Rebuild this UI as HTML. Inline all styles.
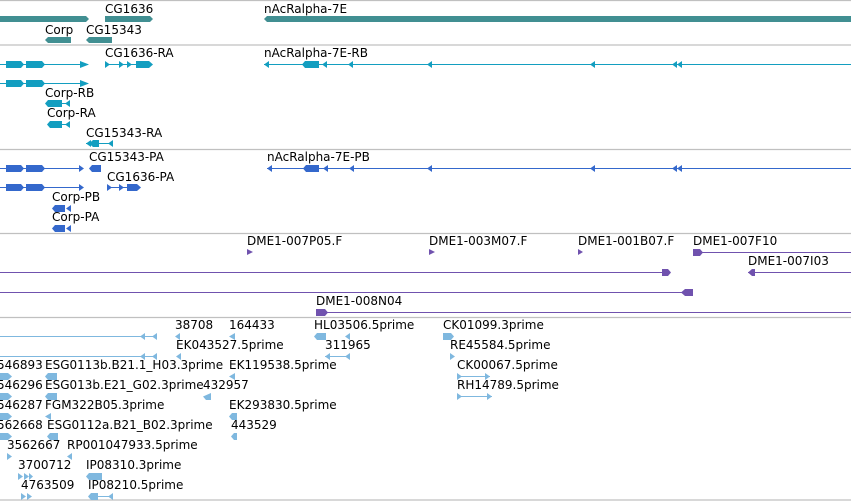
<!DOCTYPE html>
<html><head><meta charset="utf-8"><style>
html,body{margin:0;padding:0;background:#fff;width:851px;height:501px;overflow:hidden}
svg{display:block}
text{font-family:"DejaVu Sans","Liberation Sans",sans-serif;font-size:12px;fill:#000}
</style></head><body>
<svg width="851" height="501" viewBox="0 0 851 501">
<g stroke="#c0c0c0" stroke-width="1.2">
<line x1="0" y1="0.5" x2="851" y2="0.5"/><line x1="0" y1="45" x2="851" y2="45"/>
<line x1="0" y1="149.5" x2="851" y2="149.5"/><line x1="0" y1="233.5" x2="851" y2="233.5"/>
<line x1="0" y1="317.5" x2="851" y2="317.5"/><line x1="0" y1="500" x2="851" y2="500"/>
</g>
<!-- track 1 -->
<g fill="#418f92">
<polygon points="0,16 86,16 89,19 86,22 0,22"/>
<polygon points="105,16 150,16 153,19 150,22 105,22"/>
<polygon points="267,16 851,16 851,22 267,22 264,19"/>
<polygon points="48,37 71,37 71,43 48,43 45,40"/>
<polygon points="89,37 112,37 112,43 89,43 86,40"/>
</g>
<text x="105" y="13">CG1636</text><text x="264" y="13">nAcRalpha-7E</text>
<text x="45" y="34">Corp</text><text x="86" y="34">CG15343</text>
<!-- track 2 -->
<g fill="#139ec0" stroke="#139ec0">
<line x1="0" y1="64.5" x2="88" y2="64.5"/><line x1="105" y1="64.5" x2="150" y2="64.5"/><line x1="264" y1="64.5" x2="851" y2="64.5"/>
<line x1="0" y1="83.5" x2="88" y2="83.5"/>
<line x1="48" y1="103.5" x2="70" y2="103.5"/><line x1="48" y1="124.5" x2="70" y2="124.5"/><line x1="86" y1="143.5" x2="113" y2="143.5"/>
</g>
<g fill="#139ec0">
<rect x="6" y="61" width="15" height="7"/><polygon points="21,61 24,64.5 21,68"/><rect x="26" y="61" width="16" height="7"/><polygon points="42,61 45,64.5 42,68"/><polygon points="80,61 89,64.5 80,68"/>
<rect x="6" y="80" width="15" height="7"/><polygon points="21,80 24,83.5 21,87"/><rect x="26" y="80" width="16" height="7"/><polygon points="42,80 45,83.5 42,87"/><polygon points="80,80 89,83.5 80,87"/>
<polygon points="105,61 110,64.5 105,68"/><polygon points="119,61 124,64.5 119,68"/><polygon points="127,61 132,64.5 127,68"/><rect x="136" y="61" width="13" height="7"/><polygon points="149,61 153,64.5 149,68"/>
<polygon points="269,61 264,64.5 269,68"/><rect x="305" y="61" width="14" height="7"/><polygon points="302,64.5 305,61 305,68"/><polygon points="327,61 322,64.5 327,68"/><polygon points="353,61 348,64.5 353,68"/><polygon points="432,61 427,64.5 432,68"/><polygon points="595,61 590,64.5 595,68"/><polygon points="677,61 672,64.5 677,68"/><polygon points="682,61 677,64.5 682,68"/>
<polygon points="48,100 62,100 62,107 48,107 45,103.5"/><polygon points="70,100 65,103.5 70,107"/>
<polygon points="50,121 62,121 62,128 50,128 47,124.5"/><polygon points="70,121 65,124.5 70,128"/>
<polygon points="91,140 86,143.5 91,147"/><rect x="93" y="140" width="6" height="7"/><polygon points="93,140 89,143.5 93,147"/><polygon points="113,140 108,143.5 113,147"/>
</g>
<text x="105" y="57">CG1636-RA</text><text x="264" y="57">nAcRalpha-7E-RB</text>
<text x="45" y="97">Corp-RB</text><text x="47" y="117">Corp-RA</text><text x="86" y="137">CG15343-RA</text>
<!-- track 3 -->
<g stroke="#3468cc"><line x1="0" y1="168.5" x2="83" y2="168.5"/><line x1="267" y1="168.5" x2="851" y2="168.5"/><line x1="0" y1="187.5" x2="83" y2="187.5"/><line x1="107" y1="187.5" x2="140" y2="187.5"/></g>
<g fill="#3468cc">
<rect x="6" y="165" width="15" height="7"/><polygon points="21,165 24,168.5 21,172"/><rect x="26" y="165" width="16" height="7"/><polygon points="42,165 45,168.5 42,172"/><polygon points="79,165 84,168.5 79,172"/>
<rect x="6" y="184" width="15" height="7"/><polygon points="21,184 24,187.5 21,191"/><rect x="26" y="184" width="16" height="7"/><polygon points="42,184 45,187.5 42,191"/><polygon points="79,184 84,187.5 79,191"/>
<polygon points="92,165 101,165 101,172 92,172 89,168.5"/>
<polygon points="107,184 112,187.5 107,191"/><polygon points="119,184 124,187.5 119,191"/><rect x="127" y="184" width="10" height="7"/><polygon points="137,184 141,187.5 137,191"/>
<polygon points="272,165 267,168.5 272,172"/><rect x="306" y="165" width="13" height="7"/><polygon points="303,168.5 306,165 306,172"/><polygon points="328,165 323,168.5 328,172"/><polygon points="354,165 349,168.5 354,172"/><polygon points="432,165 427,168.5 432,172"/><polygon points="595,165 590,168.5 595,172"/><polygon points="677,165 672,168.5 677,172"/><polygon points="682,165 677,168.5 682,172"/>
<polygon points="55,205 65,205 65,212 55,212 52,208.5"/><polygon points="71,205 66,208.5 71,212"/>
<polygon points="55,225 65,225 65,232 55,232 52,228.5"/><polygon points="71,225 66,228.5 71,232"/>
</g>
<text x="89" y="161">CG15343-PA</text><text x="267" y="161">nAcRalpha-7E-PB</text>
<text x="107" y="181">CG1636-PA</text><text x="52" y="201">Corp-PB</text><text x="52" y="221">Corp-PA</text>
<!-- track 4 -->
<g stroke="#7052ae"><line x1="693" y1="252.5" x2="851" y2="252.5"/><line x1="0" y1="272.5" x2="668" y2="272.5"/><line x1="748" y1="272.5" x2="851" y2="272.5"/><line x1="0" y1="292.5" x2="693" y2="292.5"/><line x1="316" y1="312.5" x2="851" y2="312.5"/></g>
<g fill="#7052ae">
<polygon points="247,249 253,252 247,255"/><polygon points="429,249 435,252 429,255"/><polygon points="578,249 583,252 578,255"/>
<polygon points="693,249 700,249 703,252.5 700,256 693,256"/>
<polygon points="662,269 668,269 671,272.5 668,276 662,276"/>
<polygon points="748,272.5 752,269 755,269 755,276 752,276"/>
<polygon points="681,292.5 685,289 693,289 693,296 685,296"/>
<polygon points="316,309 325,309 328,312.5 325,316 316,316"/>
</g>
<text x="247" y="245">DME1-007P05.F</text><text x="429" y="245">DME1-003M07.F</text><text x="578" y="245">DME1-001B07.F</text><text x="693" y="245">DME1-007F10</text>
<text x="748" y="265">DME1-007I03</text><text x="316" y="305">DME1-008N04</text>
<!-- track 5 -->
<g stroke="#7fb8df"><line x1="0" y1="336.5" x2="153" y2="336.5"/><line x1="0" y1="356.5" x2="153" y2="356.5"/><line x1="325" y1="356.5" x2="350" y2="356.5"/><line x1="457" y1="376.5" x2="490" y2="376.5"/><line x1="457" y1="396.5" x2="492" y2="396.5"/><line x1="95" y1="496.5" x2="113" y2="496.5"/></g>
<g fill="#7fb8df">
<polygon points="145,333 140,336.5 145,340"/><polygon points="157,333 152,336.5 157,340"/>
<polygon points="145,353 140,356.5 145,360"/><polygon points="157,353 152,356.5 157,360"/>
<polygon points="180,333 175,336.5 180,340"/><polygon points="235,333 229,336.5 235,340"/>
<polygon points="317,333 326,333 326,340 317,340 314,336.5"/><polygon points="350,333 345,336.5 350,340"/>
<polygon points="443,333 451,333 454,336.5 451,340 443,340"/>
<polygon points="181,353 176,356.5 181,360"/><polygon points="330,353 325,356.5 330,360"/><polygon points="350,353 345,356.5 350,360"/>
<polygon points="450,353 455,356.5 450,360"/>
<polygon points="0,373 8,373 12,376.5 8,380 0,380"/><polygon points="48,373 57,373 57,380 48,380 45,376.5"/><polygon points="235,373 229,376.5 235,380"/>
<polygon points="457,373 462,376.5 457,380"/><polygon points="485,373 490,376.5 485,380"/>
<polygon points="0,393 8,393 12,396.5 8,400 0,400"/><polygon points="48,393 57,393 57,400 48,400 45,396.5"/><polygon points="211,393 203,396.5 206,400 211,400"/>
<polygon points="457,393 462,396.5 457,400"/><polygon points="487,393 492,396.5 487,400"/>
<polygon points="0,413 8,413 12,416.5 8,420 0,420"/><polygon points="51,413 45,416.5 51,420"/><polygon points="232,413 237,413 237,420 232,420 229,416.5"/>
<polygon points="0,433 8,433 12,436.5 8,440 0,440"/><polygon points="50,433 58,433 58,440 50,440 47,436.5"/><polygon points="234,433 237,433 237,440 234,440 231,436.5"/>
<polygon points="7,453 12,456.5 7,460"/><polygon points="72,453 67,456.5 72,460"/>
<polygon points="18,473 23,476.5 18,480"/><polygon points="24,473 29,476.5 24,480"/><polygon points="29,473 33,476.5 29,480"/><polygon points="89,473 102,473 102,480 89,480 86,476.5"/>
<polygon points="21,493 26,496.5 21,500"/><polygon points="27,493 32,496.5 27,500"/><polygon points="91,493 98,493 98,500 91,500 88,496.5"/><polygon points="113,493 108,496.5 113,500"/>
</g>
<text x="175" y="329">38708</text><text x="229" y="329">164433</text><text x="314" y="329">HL03506.5prime</text><text x="443" y="329">CK01099.3prime</text>
<text x="176" y="349">EK043527.5prime</text><text x="325" y="349">311965</text><text x="450" y="349">RE45584.5prime</text>
<text x="-3" y="369">546893</text><text x="45" y="369">ESG0113b.B21.1_H03.3prime</text><text x="229" y="369">EK119538.5prime</text><text x="457" y="369">CK00067.5prime</text>
<text x="-3" y="389">546296</text><text x="45" y="389">ESG013b.E21_G02.3prime</text><text x="203" y="389">432957</text><text x="457" y="389">RH14789.5prime</text>
<text x="-3" y="409">546287</text><text x="45" y="409">FGM322B05.3prime</text><text x="229" y="409">EK293830.5prime</text>
<text x="-3" y="429">562668</text><text x="47" y="429">ESG0112a.B21_B02.3prime</text><text x="231" y="429">443529</text>
<text x="7" y="449">3562667</text><text x="67" y="449">RP001047933.5prime</text>
<text x="18" y="469">3700712</text><text x="86" y="469">IP08310.3prime</text>
<text x="21" y="489">4763509</text><text x="88" y="489">IP08210.5prime</text>
</svg>
</body></html>
